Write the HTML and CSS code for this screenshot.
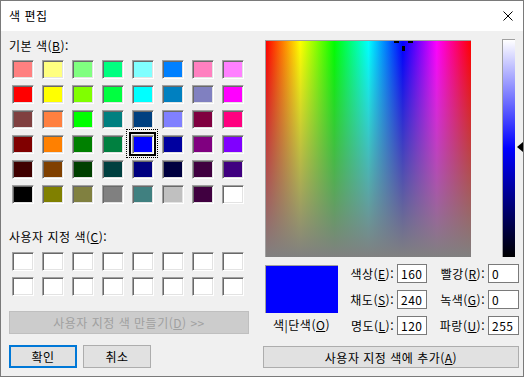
FILE: index.html
```html
<!DOCTYPE html>
<html lang="ko">
<head>
  <meta charset="UTF-8">
  <meta name="viewport" content="width=device-width, initial-scale=1.0">
  <title>색 편집</title>
  <link rel="stylesheet" href="styles.css">
</head>
<body>
  <div class="window">
    <div class="titlebar">
      <span class="title">색 편집</span>
      <svg class="close" width="10" height="10" viewBox="0 0 10 10">
        <path d="M0.5 0.5 L9.5 9.5 M9.5 0.5 L0.5 9.5" stroke="#000" stroke-width="1" fill="none"/>
      </svg>
    </div>

    <div class="main">
      <div class="left">
        <div class="label first">기본 색(<u>B</u>):</div>
        <div class="grid" id="basic"></div>

        <div class="label custom">사용자 지정 색(<u>C</u>):</div>
        <div class="grid custom-grid" id="custom"></div>

        <button class="define" disabled>사용자 지정 색 만들기(<u>D</u>) &gt;&gt;</button>

        <div class="actions">
          <button class="btn default">확인</button>
          <button class="btn">취소</button>
        </div>
      </div>

      <div class="right">
        <div class="picker">
          <div class="spectrum">
            <span class="cross cross-l"></span>
            <span class="cross cross-r"></span>
            <span class="cross cross-b"></span>
          </div>
          <div class="lum"></div>
          <div class="arrow"></div>
        </div>

        <div class="info">
          <div class="preview-col">
            <div class="preview"></div>
            <div class="preview-label">색|단색(<u>O</u>)</div>
          </div>
          <div class="fields">
            <label>색상(<u>E</u>):</label><div class="val">160</div>
            <label>빨강(<u>R</u>):</label><div class="val">0</div>
            <label>채도(<u>S</u>):</label><div class="val">240</div>
            <label>녹색(<u>G</u>):</label><div class="val">0</div>
            <label>명도(<u>L</u>):</label><div class="val">120</div>
            <label>파랑(<u>U</u>):</label><div class="val">255</div>
          </div>
        </div>

        <button class="btn add">사용자 지정 색에 추가(<u>A</u>)</button>
      </div>
    </div>
  </div>

  <script>
    const basicColors = [
      '#ff8080', '#ffff80', '#80ff80', '#00ff80', '#80ffff', '#0080ff', '#ff80c0', '#ff80ff',
      '#ff0000', '#ffff00', '#80ff00', '#00ff40', '#00ffff', '#0080c0', '#8080c0', '#ff00ff',
      '#804040', '#ff8040', '#00ff00', '#008080', '#004080', '#8080ff', '#800040', '#ff0080',
      '#800000', '#ff8000', '#008000', '#008040', '#0000ff', '#0000a0', '#800080', '#8000ff',
      '#400000', '#804000', '#004000', '#004040', '#000080', '#000040', '#400040', '#400080',
      '#000000', '#808000', '#808040', '#808080', '#408080', '#c0c0c0', '#400040', '#ffffff'
    ];
    const selected = 28;

    const basic = document.getElementById('basic');
    basicColors.forEach((color, i) => {
      const sw = document.createElement('div');
      sw.className = 'sw' + (i === selected ? ' selected' : '');
      sw.style.background = color;
      basic.appendChild(sw);
    });

    // 16 empty custom slots
    const custom = document.getElementById('custom');
    for (let i = 0; i < 16; i++) {
      const sw = document.createElement('div');
      sw.className = 'sw';
      custom.appendChild(sw);
    }
  </script>
</body>
</html>
```

FILE: styles.css
```css
* {
  box-sizing: border-box;
}
body {
  margin: 0;
  font-family: "Noto Sans CJK KR", "Noto Sans", sans-serif;
  font-size: 12px;
  letter-spacing: 0.5px;
  color: #000;
}
u {
  text-underline-offset: 1px;
}
.window {
  width: 524px;
  height: 377px;
  border: 1px solid #7a7a7a;
  background: #f0f0f0;
  display: flex;
  flex-direction: column;
}
.titlebar {
  height: 30px;
  background: #fff;
  display: flex;
  align-items: center;
  justify-content: space-between;
  padding: 0 10px 0 8px;
}
.title {
  line-height: 16px;
}
.main {
  display: flex;
  gap: 14px;
  padding-left: 8px;
}
.left {
  width: 240px;
  display: flex;
  flex-direction: column;
}
.label {
  line-height: 16px;
}
.label.first {
  margin-top: 7px;
}
.label.custom {
  margin-top: 25px;
}
.grid {
  display: grid;
  grid-template-columns: repeat(8, 22px);
  grid-auto-rows: 19px;
  column-gap: 8px;
  row-gap: 6px;
  margin: 6px 0 0 3px;
}
.grid.custom-grid {
  margin-top: 7px;
}
.sw {
  position: relative;
  background: #fff;
  border: 1px solid;
  border-color: #a0a0a0 #fff #fff #a0a0a0;
  box-shadow: inset 1px 1px #696969, inset -1px -1px #e3e3e3;
}
.sw.selected::before {
  content: "";
  position: absolute;
  inset: -4px -3px -3px -4px;
  border: 2px solid #000;
}
.sw.selected::after {
  content: "";
  position: absolute;
  inset: -7px -5px -5px -7px;
  border: 1px dotted #000;
}
button {
  font: inherit;
  letter-spacing: inherit;
  padding: 0;
  color: #000;
}
.define {
  margin-top: 15px;
  width: 240px;
  height: 23px;
  background: #cccccc;
  border: 1px solid #bfbfbf;
  color: #a0a0a0;
}
.actions {
  display: flex;
  gap: 6px;
  margin-top: 11px;
}
.btn {
  width: 68px;
  height: 23px;
  background: #e1e1e1;
  border: 1px solid #adadad;
}
.btn.default {
  border: 2px solid #0078d7;
}
.right {
  width: 256px;
}
.picker {
  position: relative;
  display: flex;
  align-items: flex-start;
  margin-top: 8px;
}
.spectrum {
  position: relative;
  overflow: hidden;
  width: 206px;
  height: 217px;
  margin: 1px 0 0 2px;
  border-top: 1px solid #a0a0a0;
  border-left: 1px solid #a0a0a0;
  background:
    linear-gradient(to bottom, rgba(128, 128, 128, 0), rgb(128, 128, 128)),
    linear-gradient(to right, #f00, #ff0 16.7%, #0f0 33.3%, #0ff 50%, #00f 66.7%, #f0f 83.3%, #f00);
}
.cross {
  position: absolute;
  background: #000;
}
.cross-l {
  left: 128px;
  top: 0;
  width: 5px;
  height: 2px;
}
.cross-r {
  left: 142px;
  top: 0;
  width: 5px;
  height: 2px;
}
.cross-b {
  left: 136px;
  top: 5px;
  width: 3px;
  height: 5px;
}
.lum {
  width: 13px;
  height: 218px;
  margin-left: 31px;
  border-top: 1px solid #a0a0a0;
  border-left: 1px solid #a0a0a0;
  background: linear-gradient(to bottom, #fff, #00f 50%, #000);
}
.arrow {
  position: absolute;
  left: 254px;
  top: 103px;
  width: 0;
  height: 0;
  border-top: 5px solid transparent;
  border-bottom: 5px solid transparent;
  border-right: 6px solid #000;
}
.info {
  display: flex;
  margin-top: 7px;
}
.preview-col {
  width: 77px;
  display: flex;
  flex-direction: column;
  align-items: center;
}
.preview {
  width: 73px;
  height: 48px;
  margin-top: 1px;
  background: #00f;
  border-top: 1px solid #a0a0a0;
  border-left: 1px solid #a0a0a0;
}
.preview-label {
  margin-top: 4px;
  line-height: 16px;
}
.fields {
  display: grid;
  grid-template-columns: 54px 30px 55px 31px;
  grid-auto-rows: 19px;
  column-gap: 3px;
  row-gap: 7px;
}
.fields label {
  text-align: right;
  line-height: 19px;
  white-space: nowrap;
}
.val {
  background: #fff;
  border: 1px solid #7a7a7a;
  padding-left: 3px;
  line-height: 17px;
}
.btn.add {
  width: 256px;
  height: 22px;
  margin-top: 11px;
}
```
